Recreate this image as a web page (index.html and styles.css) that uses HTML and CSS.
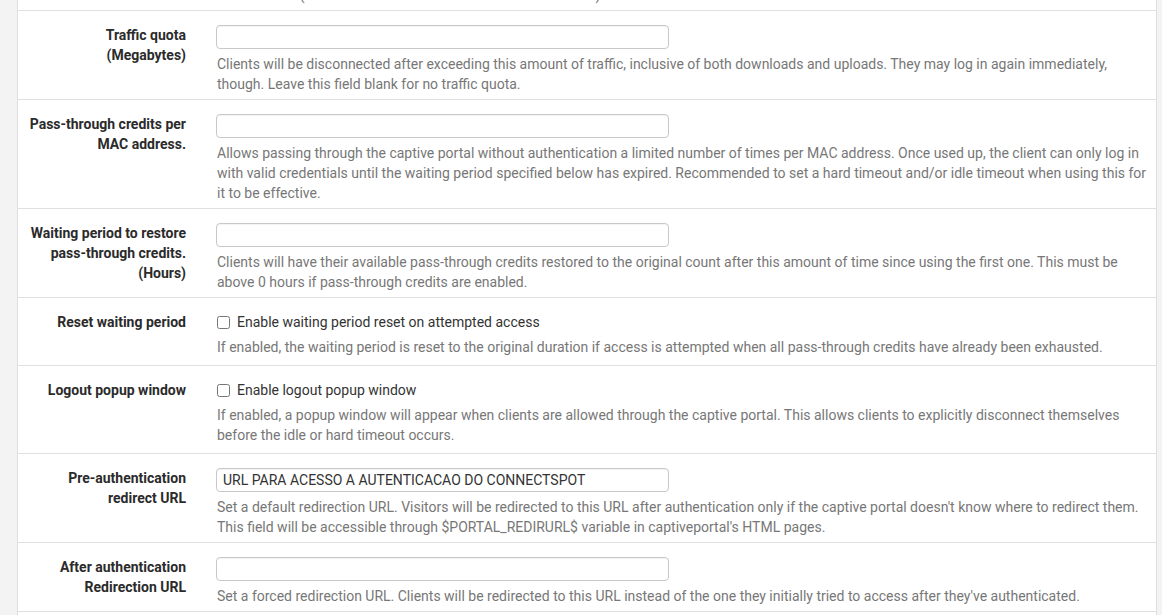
FILE: index.html
```html
<!DOCTYPE html>
<html>
<head>
<meta charset="utf-8">
<link rel="stylesheet" href="styles.css">
</head>
<body>
<div class="viewport">
  <div class="panel">
    <div class="row">
      <div class="label">Hard timeout (Minutes)</div>
      <div class="control">
        <input class="text" type="text">
        <div class="help">Clients will be disconnected after this amount of time, regardless of activity. They may log in again immediately, though. Leave this field blank for no<br>hard timeout (not recommended unless an idle timeout is set).</div>
      </div>
    </div>
    <div class="row">
      <div class="label">Traffic quota (Megabytes)</div>
      <div class="control">
        <input class="text" type="text">
        <div class="help">Clients will be disconnected after exceeding this amount of traffic, inclusive of both downloads and uploads. They may log in again immediately, though. Leave this field blank for no traffic quota.</div>
      </div>
    </div>
    <div class="row">
      <div class="label">Pass-through credits per MAC address.</div>
      <div class="control">
        <input class="text" type="text">
        <div class="help">Allows passing through the captive portal without authentication a limited number of times per MAC address. Once used up, the client can only log in with valid credentials until the waiting period specified below has expired. Recommended to set a hard timeout and/or idle timeout when using this for it to be effective.</div>
      </div>
    </div>
    <div class="row">
      <div class="label">Waiting period to restore pass-through credits. (Hours)</div>
      <div class="control">
        <input class="text" type="text">
        <div class="help">Clients will have their available pass-through credits restored to the original count after this amount of time since using the first one. This must be above 0 hours if pass-through credits are enabled.</div>
      </div>
    </div>
    <div class="row row-check">
      <div class="label">Reset waiting period</div>
      <div class="control">
        <label class="check"><input type="checkbox"><span>Enable waiting period reset on attempted access</span></label>
        <div class="help">If enabled, the waiting period is reset to the original duration if access is attempted when all pass-through credits have already been exhausted.</div>
      </div>
    </div>
    <div class="row row-check">
      <div class="label">Logout popup window</div>
      <div class="control">
        <label class="check"><input type="checkbox"><span>Enable logout popup window</span></label>
        <div class="help">If enabled, a popup window will appear when clients are allowed through the captive portal. This allows clients to explicitly disconnect themselves before the idle or hard timeout occurs.</div>
      </div>
    </div>
    <div class="row">
      <div class="label">Pre-authentication redirect URL</div>
      <div class="control">
        <input class="text" type="text" value="URL PARA ACESSO A AUTENTICACAO DO CONNECTSPOT">
        <div class="help">Set a default redirection URL. Visitors will be redirected to this URL after authentication only if the captive portal doesn't know where to redirect them. This field will be accessible through $PORTAL_REDIRURL$ variable in captiveportal's HTML pages.</div>
      </div>
    </div>
    <div class="row">
      <div class="label">After authentication Redirection URL</div>
      <div class="control">
        <input class="text" type="text">
        <div class="help">Set a forced redirection URL. Clients will be redirected to this URL instead of the one they initially tried to access after they've authenticated.</div>
      </div>
    </div>
    <div class="row">
      <div class="label">Blocked MAC address redirect URL</div>
      <div class="control">
        <input class="text" type="text">
        <div class="help">Blocked MAC addresses will be redirected to this URL when attempting access.</div>
      </div>
    </div>
  </div>
</div>
</body>
</html>
```

FILE: styles.css
```css
html, body {
  margin: 0;
  padding: 0;
  background: #f3f3f3;
  font-family: Roboto, "Liberation Sans", sans-serif;
  font-size: 14px;
  line-height: 20px;
  color: #333;
}

.viewport {
  height: 615px;
  overflow: hidden;
}

.panel {
  margin: -78px 5px 0 17px;
  background: #fff;
  border-left: 1px solid #dedede;
  border-right: 1px solid #dedede;
}

.row {
  display: grid;
  grid-template-columns: 157px 1fr;
  column-gap: 30px;
  padding: 14px 4px 5px 11px;
  border-bottom: 1px solid #e0e0e0;
}

.row-check {
  padding-bottom: 8px;
}

.label {
  text-align: right;
  font-weight: 700;
  color: #2b2b2b;
}

.control {
  min-width: 0;
}

.text {
  display: block;
  box-sizing: border-box;
  width: 453px;
  height: 24px;
  margin: 0;
  padding: 0 6px;
  border: 1px solid #c8c8c8;
  border-radius: 4px;
  background: #fff;
  font-family: Roboto, "Liberation Sans", sans-serif;
  font-size: 14px;
  color: #333;
  box-shadow: inset 0 1px 1px rgba(0,0,0,0.05);
}

.help {
  margin-top: 5px;
  color: #777;
  padding-left: 1px;
}

.check {
  display: flex;
  align-items: center;
  height: 20px;
  color: #333;
}

.check input {
  width: 13px;
  height: 13px;
  margin: 0 7px 0 1px;
}
```
